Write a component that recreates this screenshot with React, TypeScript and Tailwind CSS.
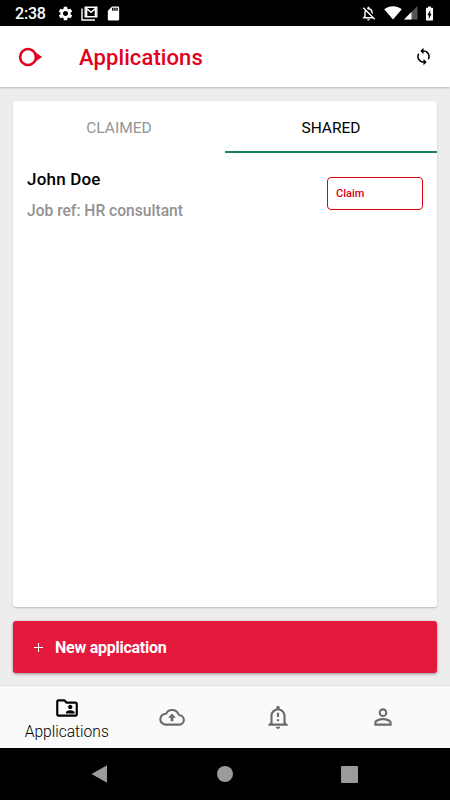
import React from "react";
import {
  MdSettings,
  MdSdCard,
  MdOutlineNotificationsOff,
  MdBatteryChargingFull,
  MdSync,
  MdOutlineFolderShared,
  MdOutlineNotificationImportant,
  MdPersonOutline,
} from "react-icons/md";

function StatusBar() {
  return (
    <div className="flex h-[26px] shrink-0 items-center bg-black pl-[15px] pr-[13px] text-white">
      <span className="w-[42px] pt-[2px] text-[16px] leading-[24px] font-medium tracking-[-0.2px] whitespace-nowrap">2:38</span>
      <MdSettings className="size-[17px]" />
      <svg className="ml-[7px] h-[15px] w-[17px]" viewBox="0 0 17 15" fill="none">
        <path d="M1 2.5V14H14" stroke="currentColor" strokeWidth="1.4" />
        <path d="M4.2 1.2H15.8V10.8H4.2Z" stroke="currentColor" strokeWidth="1.4" />
        <path d="M5.6 10.5V2.5L10 6.3L14.4 2.5V10.5" stroke="currentColor" strokeWidth="1.4" />
      </svg>
      <MdSdCard className="ml-[7px] size-[17px]" />
      <div className="ml-auto flex items-center">
        <MdOutlineNotificationsOff className="size-[17px]" />
        <svg className="ml-[7px] h-[14px] w-[18px]" viewBox="0 0 18 14" fill="currentColor">
          <path d="M0.2 3.2C5.4-.8 12.6-.8 17.8 3.2L9 13.6Z" />
        </svg>
        <svg className="ml-[2px] h-[14px] w-[14px]" viewBox="0 0 14 14">
          <path d="M13.5 0V13.5H0Z" fill="#555" />
          <path d="M7.5 6V13.5H0Z" fill="#fff" />
        </svg>
        <MdBatteryChargingFull className="ml-[3px] -mr-[1px] size-[17px]" />
      </div>
    </div>
  );
}

function Header() {
  return (
    <header className="flex h-[61px] shrink-0 items-center bg-white pl-[18px] pr-[17px] shadow-[0_1px_2px_rgba(0,0,0,0.22)]">
      <svg className="h-[20px] w-[25px]" viewBox="0 0 25 20">
        <path d="M14 1.8Q18.5 7 24.2 10Q18.5 13 14 18.2Z" fill="#e2001f" />
        <circle cx="10" cy="10" r="7.9" fill="#fff" stroke="#e2001f" strokeWidth="2.5" />
      </svg>
      <h1 className="ml-[36px] pt-[3px] text-[22px] leading-[28px] font-medium tracking-[0.1px] text-[#e4001c]">Applications</h1>
      <MdSync className="ml-auto size-[19px] text-black" />
    </header>
  );
}

function ApplicationRow() {
  return (
    <div className="flex justify-between pl-[14px] pr-[14px] pt-[16px]">
      <div>
        <p className="text-[17px] leading-[20px] font-medium tracking-[0.2px] text-black">John Doe</p>
        <p className="mt-[13px] text-[15.6px] leading-[19px] font-medium text-[#929292]">Job ref: HR consultant</p>
      </div>
      <button className="mt-[8px] h-[33px] w-[96px] rounded-[4px] border border-[#dc0010] pt-[2px] pl-[8px] text-left text-[11px] font-medium text-[#dc0010]">
        Claim
      </button>
    </div>
  );
}

function UploadCloud() {
  return (
    <svg className="size-[26px]" viewBox="0 0 24 24" fill="none">
      <path
        d="M18.2 10.2A6.3 6.3 0 0 0 6.5 9A5 5 0 0 0 6 19H19A4.2 4.2 0 0 0 18.2 10.4"
        stroke="currentColor"
        strokeWidth="2"
        strokeLinejoin="round"
      />
      <path d="M8.4 12.6L12 8.8L15.6 12.6H13.3V16H10.7V12.6Z" fill="currentColor" />
    </svg>
  );
}

function BottomNav() {
  return (
    <nav className="flex h-[63px] shrink-0 border-t border-[#e2e2e2] bg-[#fafafa] px-[14px] text-[#6b6b6b]">
      <div className="flex flex-1 flex-col items-center pt-[9px] text-black">
        <MdOutlineFolderShared className="size-[26px]" />
        <span className="pt-[1px] text-[15.6px] leading-[20px] font-[350]">Applications</span>
      </div>
      <div className="flex flex-1 items-center justify-center">
        <UploadCloud />
      </div>
      <div className="flex flex-1 items-center justify-center">
        <MdOutlineNotificationImportant className="size-[26px]" />
      </div>
      <div className="flex flex-1 items-center justify-center">
        <MdPersonOutline className="size-[26px]" />
      </div>
    </nav>
  );
}

function SystemNav() {
  return (
    <div className="flex h-[52px] shrink-0 items-center justify-between bg-black pl-[91px] pr-[92px]">
      <svg className="size-[18px]" viewBox="0 0 18 18" fill="#9b9b9b"><path d="M.5 9L16 .2V17.8Z" /></svg>
      <div className="size-[16px] rounded-full bg-[#9b9b9b]" />
      <div className="size-[17px] rounded-[1px] bg-[#9b9b9b]" />
    </div>
  );
}

export default function App() {
  return (
    <div className="flex h-[800px] w-[450px] flex-col overflow-hidden bg-[#ededed] font-['Roboto',sans-serif]">
      <StatusBar />
      <Header />
      <main className="flex flex-1 flex-col px-[13px] pt-[14px] pb-[12px]">
        <section className="h-[506px] overflow-hidden rounded-[3px] bg-white shadow-[0_1px_2px_rgba(0,0,0,0.22)]">
          <div className="flex h-[52px] text-[15.5px]">
            <button className="flex-1 pt-[3px] text-[#949494]">CLAIMED</button>
            <button className="flex-1 border-b-2 border-[#148068] pt-[5px] text-black">SHARED</button>
          </div>
          <ApplicationRow />
        </section>
        <button className="mt-[14px] flex h-[52px] items-center rounded-[3px] bg-[#e5183e] pl-[20px] text-[16px] font-bold tracking-[-0.25px] text-white shadow-[0_1px_3px_rgba(0,0,0,0.4)]">
          <svg className="size-[11px]" viewBox="0 0 11 11"><path d="M5.5 1V10M1 5.5H10" stroke="#fff" strokeWidth="1" /></svg>
          <span className="ml-[11px] pt-[2px]">New application</span>
        </button>
      </main>
      <BottomNav />
      <SystemNav />
    </div>
  );
}
